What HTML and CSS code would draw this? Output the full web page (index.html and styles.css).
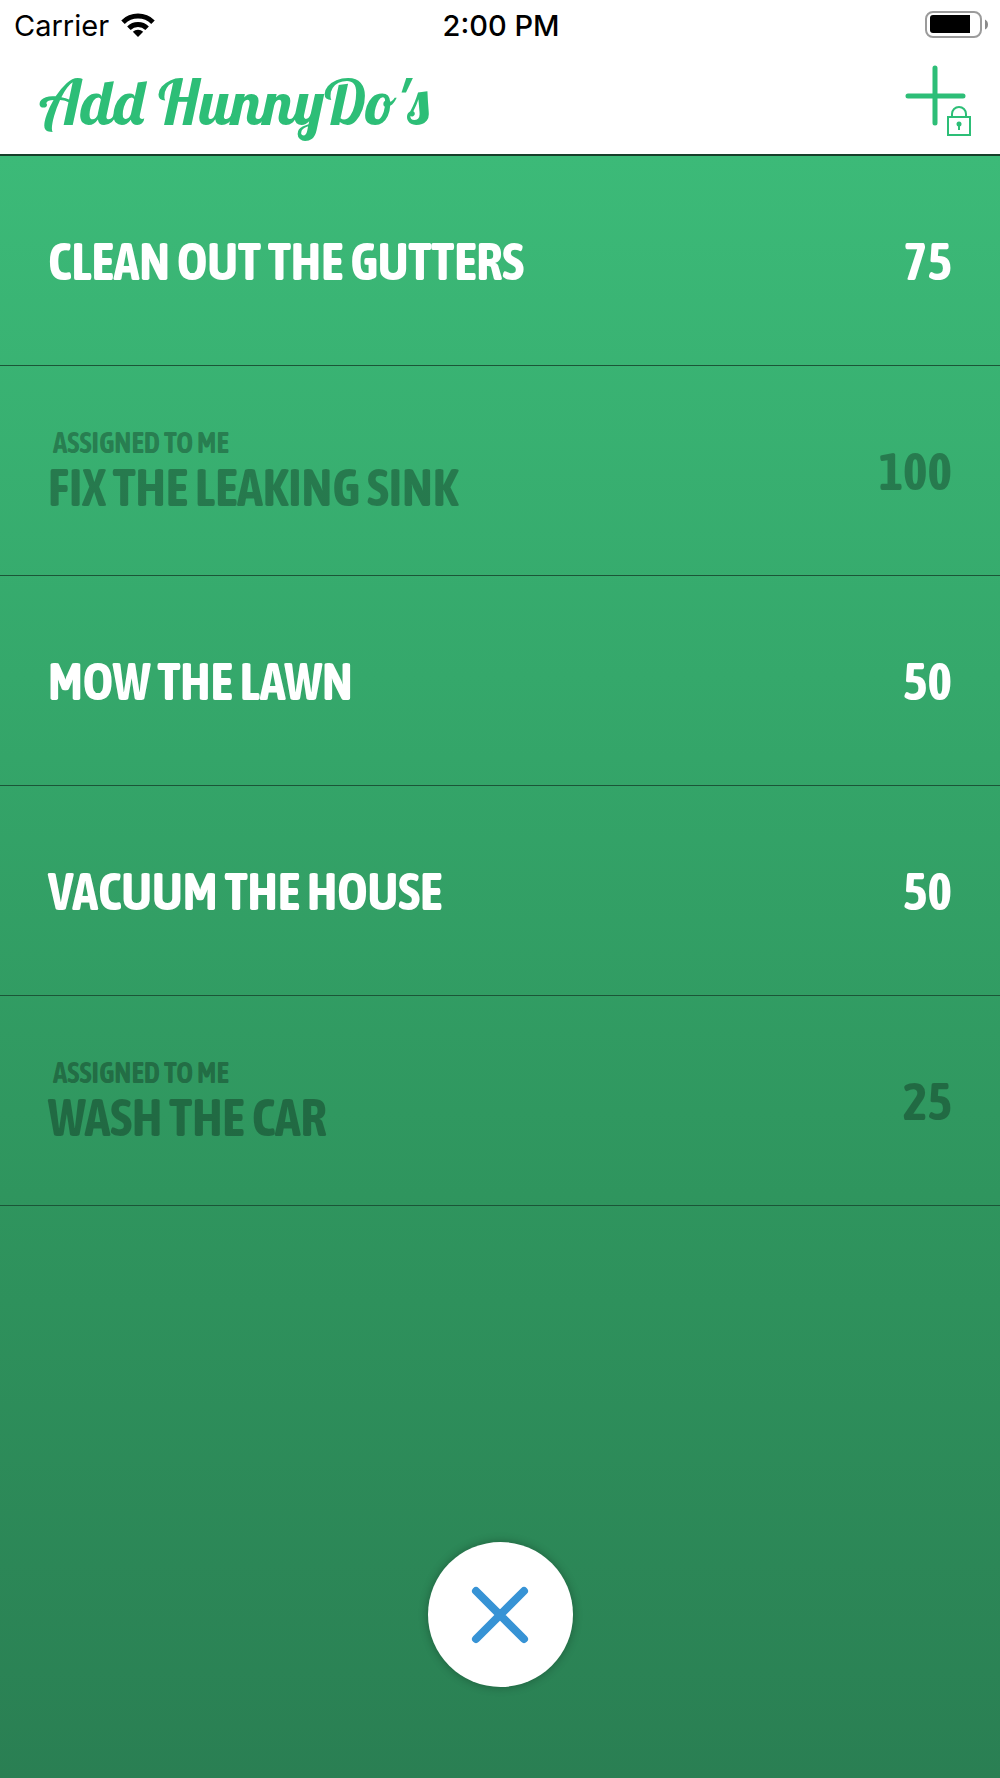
FILE: index.html
```html
<!DOCTYPE html>
<html lang="en">
<head>
  <meta charset="UTF-8" />
  <meta name="viewport" content="width=device-width, initial-scale=1.0"/>
  <title>Add HunnyDo's</title>
  <link rel="stylesheet" href="styles.css">
</head>
<body>
  <header class="header">
    <div class="status-bar">
      <div class="carrier">
        <span>Carrier</span>
        <svg class="wifi" viewBox="0 0 34 24" width="34" height="24" aria-hidden="true">
          <g fill="none" stroke="#000" stroke-width="5">
            <path d="M2 9.2A21.5 21.5 0 0 1 32 9.2"/>
            <path d="M7.9 15.2A13 13 0 0 1 26.1 15.2"/>
          </g>
          <path d="M17 24L11.8 18.8A7.4 7.4 0 0 1 22.2 18.8Z"/>
        </svg>
      </div>
      <span class="time">2:00 PM</span>
      <svg class="battery" viewBox="0 0 64 28" width="64" height="28" aria-hidden="true">
        <rect x="2" y="1" width="55" height="25" rx="7" fill="none" stroke="#9b9b9b" stroke-width="2"/>
        <path d="M9 4H46V22H9Q6 22 6 19V7Q6 4 9 4Z"/>
        <path d="M61 8.500Q64 10 64 13.500T61 18.500Z" fill="#8a8a8a"/>
      </svg>
    </div>
    <div class="title-bar">
      <h1>Add HunnyDo's</h1>
      <button type="button" class="add-button" aria-label="Add">
        <svg viewBox="0 0 68 76" width="68" height="76" aria-hidden="true">
          <g fill="none" stroke="#2dbe77">
            <path d="M31 4V59M4 32H59" stroke-width="5" stroke-linecap="round"/>
            <rect x="44" y="53" width="22" height="18" stroke-width="2"/>
            <path d="M48 53V50A7 7 0 0 1 62 50V53" stroke-width="2"/>
            <path d="M55 61V66" stroke-width="2"/>
          </g>
          <circle cx="55" cy="60" r="2.500" fill="#2dbe77"/>
        </svg>
      </button>
    </div>
  </header>

  <main class="content">
    <ul class="chores">
      <li class="chore">
        <span class="name">CLEAN OUT THE GUTTERS</span>
        <span class="points">75</span>
      </li>
      <li class="chore assigned">
        <div class="details">
          <span class="note">ASSIGNED TO ME</span>
          <span class="name">FIX THE LEAKING SINK</span>
        </div>
        <span class="points">100</span>
      </li>
      <li class="chore">
        <span class="name">MOW THE LAWN</span>
        <span class="points">50</span>
      </li>
      <li class="chore">
        <span class="name">VACUUM THE HOUSE</span>
        <span class="points">50</span>
      </li>
      <li class="chore assigned">
        <div class="details">
          <span class="note">ASSIGNED TO ME</span>
          <span class="name">WASH THE CAR</span>
        </div>
        <span class="points">25</span>
      </li>
    </ul>

    <button type="button" class="close-button" aria-label="Close">
      <svg viewBox="0 0 58 58" width="58" height="58" aria-hidden="true">
        <path d="M5 5L53 53M53 5L5 53" stroke="#3793d5" stroke-width="8" stroke-linecap="round"/>
      </svg>
    </button>
  </main>
</body>
</html>
```
FILE: styles.css
```css
* {
  box-sizing: border-box;
}
body {
  margin: 0;
  min-height: 100vh;
  display: flex;
  flex-direction: column;
  font-family: "Asap Condensed", "Roboto Condensed", "Liberation Sans", sans-serif;
}
button {
  padding: 0;
  border: none;
  cursor: pointer;
}
svg {
  display: block;
}
.header {
  background-color: #fff;
  border-bottom: 2px solid #173f2a;
}
.status-bar {
  display: grid;
  grid-template-columns: 1fr auto 1fr;
  align-items: center;
  height: 50px;
  padding: 0 12px 0 14px;
  font-family: Inter, sans-serif;
  font-size: 29px;
  color: #000;
}
.carrier {
  display: flex;
  align-items: center;
  gap: 12px;
}
.time {
  font-weight: 500;
}
.battery {
  justify-self: end;
}
.title-bar {
  display: flex;
  align-items: center;
  justify-content: space-between;
  height: 104px;
  padding: 0 28px 0 39px;
}
h1 {
  margin: 0;
  font-family: Lobster, "Liberation Serif", serif;
  font-size: 63px;
  font-weight: normal;
  line-height: 80px;
  color: #2dbe77;
}
.add-button {
  background: none;
}
.content {
  flex: 1;
  display: flex;
  flex-direction: column;
  align-items: center;
  background: linear-gradient(#3cba78, #35a86b 32%, #2f955e 64%, #2a7f53);
}
.chores {
  width: 100%;
  margin: 0;
  padding: 0;
  list-style: none;
}
.chore {
  display: flex;
  align-items: center;
  justify-content: space-between;
  height: 210px;
  padding: 0 48px;
  border-bottom: 1px solid #1b5537;
  color: #fff;
  font-size: 52px;
  font-weight: bold;
  line-height: 52px;
}
.assigned {
  color: rgba(0, 0, 0, 0.3);
}
.details {
  display: flex;
  flex-direction: column;
  padding-bottom: 4px;
}
.note {
  padding-left: 5px;
  font-size: 29px;
  line-height: 36px;
}
.close-button {
  display: flex;
  align-items: center;
  justify-content: center;
  width: 145px;
  height: 145px;
  margin: auto 0 91px;
  border-radius: 50%;
  background-color: #fff;
  box-shadow: 0 0 10px rgba(0, 0, 0, 0.3);
}
```
